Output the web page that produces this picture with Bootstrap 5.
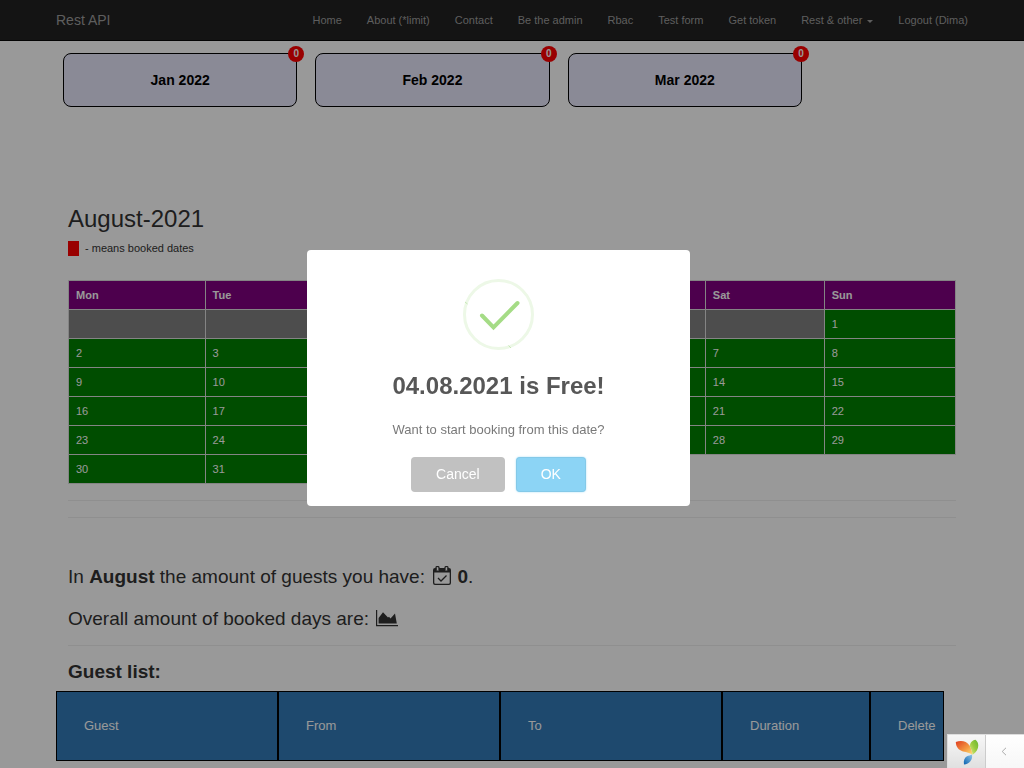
<!DOCTYPE html>
<html lang="en">
<head>
<meta charset="utf-8">
<meta name="viewport" content="width=device-width, initial-scale=1">
<title>Rest API</title>
<link href="https://cdn.jsdelivr.net/npm/bootstrap@5.3.0/dist/css/bootstrap.min.css" rel="stylesheet">
<style>
body{font-family:"Liberation Sans",Arial,sans-serif;font-size:11px;line-height:16px;color:#333;background:#fff;overflow:hidden}
.site-nav{background:#222;border-bottom:1px solid #080808;padding:0 56px;height:41px}
.site-nav .navbar-brand{font-size:14px;line-height:20px;color:#9d9d9d;padding:0;margin:0}
.site-nav .navbar-nav .nav-link{font-size:11px;line-height:16px;color:#9d9d9d;padding:12px 0}
.site-nav .navbar-nav{gap:25px}
.site-nav .dropdown-toggle::after{border-width:3px 3px 0;margin-left:5px;vertical-align:1px}
.months{display:grid;grid-template-columns:repeat(3,1fr);gap:18px;padding:12px 222px 0 63px}
.month-btn{position:relative;height:54px;border:1px solid #000;border-radius:8px;background:#e6e6fa;color:#000;font-size:14px;font-weight:700}
.count-dot{position:absolute;top:-8px;right:-8px;width:16px;height:16px;border-radius:50%;background:red;color:#fff;font-size:10px;line-height:16px}
.content{padding:96px 68px 0}
.content h1{font-size:24px;line-height:32px;margin:0 0 5px;font-weight:400}
.legend-row{gap:6px}
.swatch{width:11px;height:15px;background:red}
.calendar{margin:24px 0 16px;table-layout:fixed;width:100%;border-collapse:collapse;font-size:11px;line-height:16px}
.calendar th,.calendar td{height:29px;padding:6px 7px;border:1px solid #ddd}
.calendar th{background:purple;color:#fff}
.calendar td{background:green;color:#fff}
.calendar td.blank{background:gray}
.calendar td.none{background:transparent;border:0}
.rule{margin:0;border-top:1px solid #eee;opacity:1}
.stats{padding-top:47px}
.stat{font-size:19px;line-height:24px;margin:0 0 18px}
.stat:last-child{margin-bottom:14px}
.stat svg{display:inline-block;vertical-align:-2px;margin-left:2px}
.guest-title{font-size:19px;line-height:24px;font-weight:700;margin:14px 0 7px}
.guests{table-layout:fixed;width:calc(100% - 136px);margin-left:56px;border-collapse:separate;border-spacing:0;font-size:13px}
.guests th{height:70px;border:1px solid #000;background:#337ab7;color:#fff;font-weight:400;padding:0 0 0 27px}
.alert-layer{background:rgba(0,0,0,.4);padding:0 27px 12px 0}
.alert-layer .modal-dialog{width:383px;max-width:100%;margin:0 auto;min-height:100%}
.alert-layer .modal-content{border:0;border-radius:4px;text-align:center;padding:28px 16px 14px;align-items:center}
.alert-layer h2{font-size:24px;line-height:32px;font-weight:700;color:#575757;margin:20px 0 18px}
.alert-layer p{font-size:13px;line-height:20px;color:#797979;margin:0 0 17px}
.alert-actions{gap:11px}
.alert-layer .btn{font-size:14px;line-height:19px;padding:8px 25px;border:0;border-radius:4px;color:#fff}
.btn-no{background:#c1c1c1}
.btn-yes.btn{background:#8cd4f5;box-shadow:0 0 2px rgba(140,212,245,.8),inset 0 0 0 1px rgba(0,0,0,.05)}
.debug-bar{position:fixed;right:0;bottom:0;z-index:1100;height:34px;border:1px solid #ddd;border-width:1px 0 0 1px;background:#fff}
.debug-bar a{width:38px;background:linear-gradient(#f7f7f7,#e0e0e0);border-right:1px solid #ccc}
.debug-bar button{width:38px;border:0;padding:0 3px 0 0;background:linear-gradient(#fff,#f7f7f7)}
</style>
</head>
<body>
<nav class="site-nav navbar navbar-expand">
  <a class="navbar-brand" href="#">Rest API</a>
  <ul class="navbar-nav ms-auto">
    <li class="nav-item"><a class="nav-link" href="#">Home</a></li>
    <li class="nav-item"><a class="nav-link" href="#">About (*limit)</a></li>
    <li class="nav-item"><a class="nav-link" href="#">Contact</a></li>
    <li class="nav-item"><a class="nav-link" href="#">Be the admin</a></li>
    <li class="nav-item"><a class="nav-link" href="#">Rbac</a></li>
    <li class="nav-item"><a class="nav-link" href="#">Test form</a></li>
    <li class="nav-item"><a class="nav-link" href="#">Get token</a></li>
    <li class="nav-item"><a class="nav-link dropdown-toggle" href="#">Rest &amp; other</a></li>
    <li class="nav-item"><a class="nav-link" href="#">Logout (Dima)</a></li>
  </ul>
</nav>

<div class="months">
  <button class="month-btn" type="button">Jan 2022<span class="count-dot">0</span></button>
  <button class="month-btn" type="button">Feb 2022<span class="count-dot">0</span></button>
  <button class="month-btn" type="button">Mar 2022<span class="count-dot">0</span></button>
</div>

<main>
  <section class="content">
    <h1>August-2021</h1>
    <div class="legend-row d-flex align-items-center"><span class="swatch"></span><span>- means booked dates</span></div>
    <table class="calendar">
      <colgroup><col style="width:15.4%"><col style="width:14.1%"><col style="width:14.1%"><col style="width:14.1%"><col style="width:14.1%"><col style="width:13.4%"><col style="width:14.8%"></colgroup>
      <thead><tr><th>Mon</th><th>Tue</th><th>Wed</th><th>Thu</th><th>Fri</th><th>Sat</th><th>Sun</th></tr></thead>
      <tbody>
        <tr><td class="blank"></td><td class="blank"></td><td class="blank"></td><td class="blank"></td><td class="blank"></td><td class="blank"></td><td>1</td></tr>
        <tr><td>2</td><td>3</td><td>4</td><td>5</td><td>6</td><td>7</td><td>8</td></tr>
        <tr><td>9</td><td>10</td><td>11</td><td>12</td><td>13</td><td>14</td><td>15</td></tr>
        <tr><td>16</td><td>17</td><td>18</td><td>19</td><td>20</td><td>21</td><td>22</td></tr>
        <tr><td>23</td><td>24</td><td>25</td><td>26</td><td>27</td><td>28</td><td>29</td></tr>
        <tr><td>30</td><td>31</td><td class="none" colspan="5"></td></tr>
      </tbody>
    </table>
    <hr class="rule mb-3">
    <hr class="rule">
    <div class="stats">
      <p class="stat">In <b>August</b> the amount of guests you have:
        <svg width="20" height="19" viewBox="0 0 20 19" aria-hidden="true"><path fill="#333" fill-rule="evenodd" d="M3 2h1.500v2.500h2.500V2h6v2.500h2.500V2H17q2 0 2 2v13q0 2-2 2H3q-2 0-2-2V4q0-2 2-2zM2.300 6.500v10.200q0 1 1 1h13.400q1 0 1-1V6.500z"/><path fill="none" stroke="#333" stroke-width="1.200" d="M4 4.500V1.500q0-1 1.500-1t1.500 1v3M13 4.500V1.500q0-1 1.500-1t1.500 1v3"/><path fill="none" stroke="#333" stroke-width="1.300" d="m6 12 3 3 5.500-5.500"/></svg>
        <b>0</b>.</p>
      <p class="stat">Overall amount of booked days are:
        <svg width="22" height="17" viewBox="0 0 22 17" aria-hidden="true"><path fill="#333" d="M0 0h1.200v15H22v1.300H0zM2.600 13.500V8L7 2.200l5 5.200 1-.6 1.500 1.700 4.500-5 1.800 10z"/></svg></p>
    </div>
    <hr class="rule">
    <h2 class="guest-title">Guest list:</h2>
  </section>
  <table class="guests">
    <colgroup><col style="width:25%"><col style="width:25%"><col style="width:25%"><col style="width:16.667%"><col style="width:8.333%"></colgroup>
    <thead><tr><th>Guest</th><th>From</th><th>To</th><th>Duration</th><th>Delete</th></tr></thead>
  </table>
</main>

<div class="modal d-block alert-layer" role="dialog" aria-modal="true" aria-labelledby="alertTitle">
  <div class="modal-dialog modal-dialog-centered">
    <div class="modal-content">
      <svg width="72" height="72" viewBox="0 0 72 72" aria-hidden="true"><circle cx="35.500" cy="36.500" r="34" fill="none" stroke="#edf8e7" stroke-width="3"/><path fill="none" stroke="#a5dc86" stroke-width="4" stroke-linecap="round" d="M19 37.500 30.500 49.500 54.500 25"/><path stroke="#b5dfa0" stroke-width=".7" d="m2 24 2.500 2M45.500 67.500l2.500 2.500"/></svg>
      <h2 id="alertTitle">04.08.2021 is Free!</h2>
      <p>Want to start booking from this date?</p>
      <div class="alert-actions d-flex justify-content-center"><button class="btn btn-no" type="button">Cancel</button><button class="btn btn-yes" type="button">OK</button></div>
    </div>
  </div>
</div>

<div class="debug-bar d-flex">
  <a href="#" class="d-flex align-items-center justify-content-center" aria-label="Yii debugger">
    <svg width="24" height="26" viewBox="0 0 24 26" aria-hidden="true">
      <defs>
        <linearGradient id="leafO" x1="0" y1="0" x2="1" y2="1"><stop stop-color="#df3d20"/><stop offset=".6" stop-color="#f49a42"/><stop offset="1" stop-color="#ffe37a"/></linearGradient>
        <linearGradient id="leafG" x1="1" y1="0" x2="0" y2="1"><stop stop-color="#66b52f"/><stop offset=".5" stop-color="#9bcb3f"/><stop offset="1" stop-color="#e6ef8c"/></linearGradient>
        <linearGradient id="leafB" x1="1" y1="0" x2="0" y2="1"><stop stop-color="#8fc5e8"/><stop offset="1" stop-color="#0a62b0"/></linearGradient>
      </defs>
      <path fill="url(#leafO)" d="M.8 3C6 1 11.500 2 14.500 6.500c1.500 2.500 2.500 5.500 3 9.200C14.500 13.500 12 13.500 8 12.500 3.500 11 1 8 .8 3z"/>
      <path fill="url(#leafG)" d="M20.500.8C25 4 24 12 17.600 15.700 17.200 12.500 16.200 9.500 14.800 7.500 14.800 4 17 1.500 20.500.8z"/>
      <path fill="url(#leafB)" d="M17 15.500C18 20.500 14.500 25.300 9 25.500 8.300 21.500 9.500 18.500 12 17.200 13.800 16.400 15.500 16.500 17 15.500z"/>
    </svg>
  </a>
  <button type="button" class="d-flex align-items-center justify-content-center" aria-label="Expand toolbar"><svg width="6" height="9" viewBox="0 0 6 9" aria-hidden="true"><path fill="none" stroke="#aaa" stroke-width="1" d="M5 .8 1.200 4.500 5 8.200"/></svg></button>
</div>
<script src="https://cdn.jsdelivr.net/npm/bootstrap@5.3.0/dist/js/bootstrap.bundle.min.js"></script>
</body>
</html>
